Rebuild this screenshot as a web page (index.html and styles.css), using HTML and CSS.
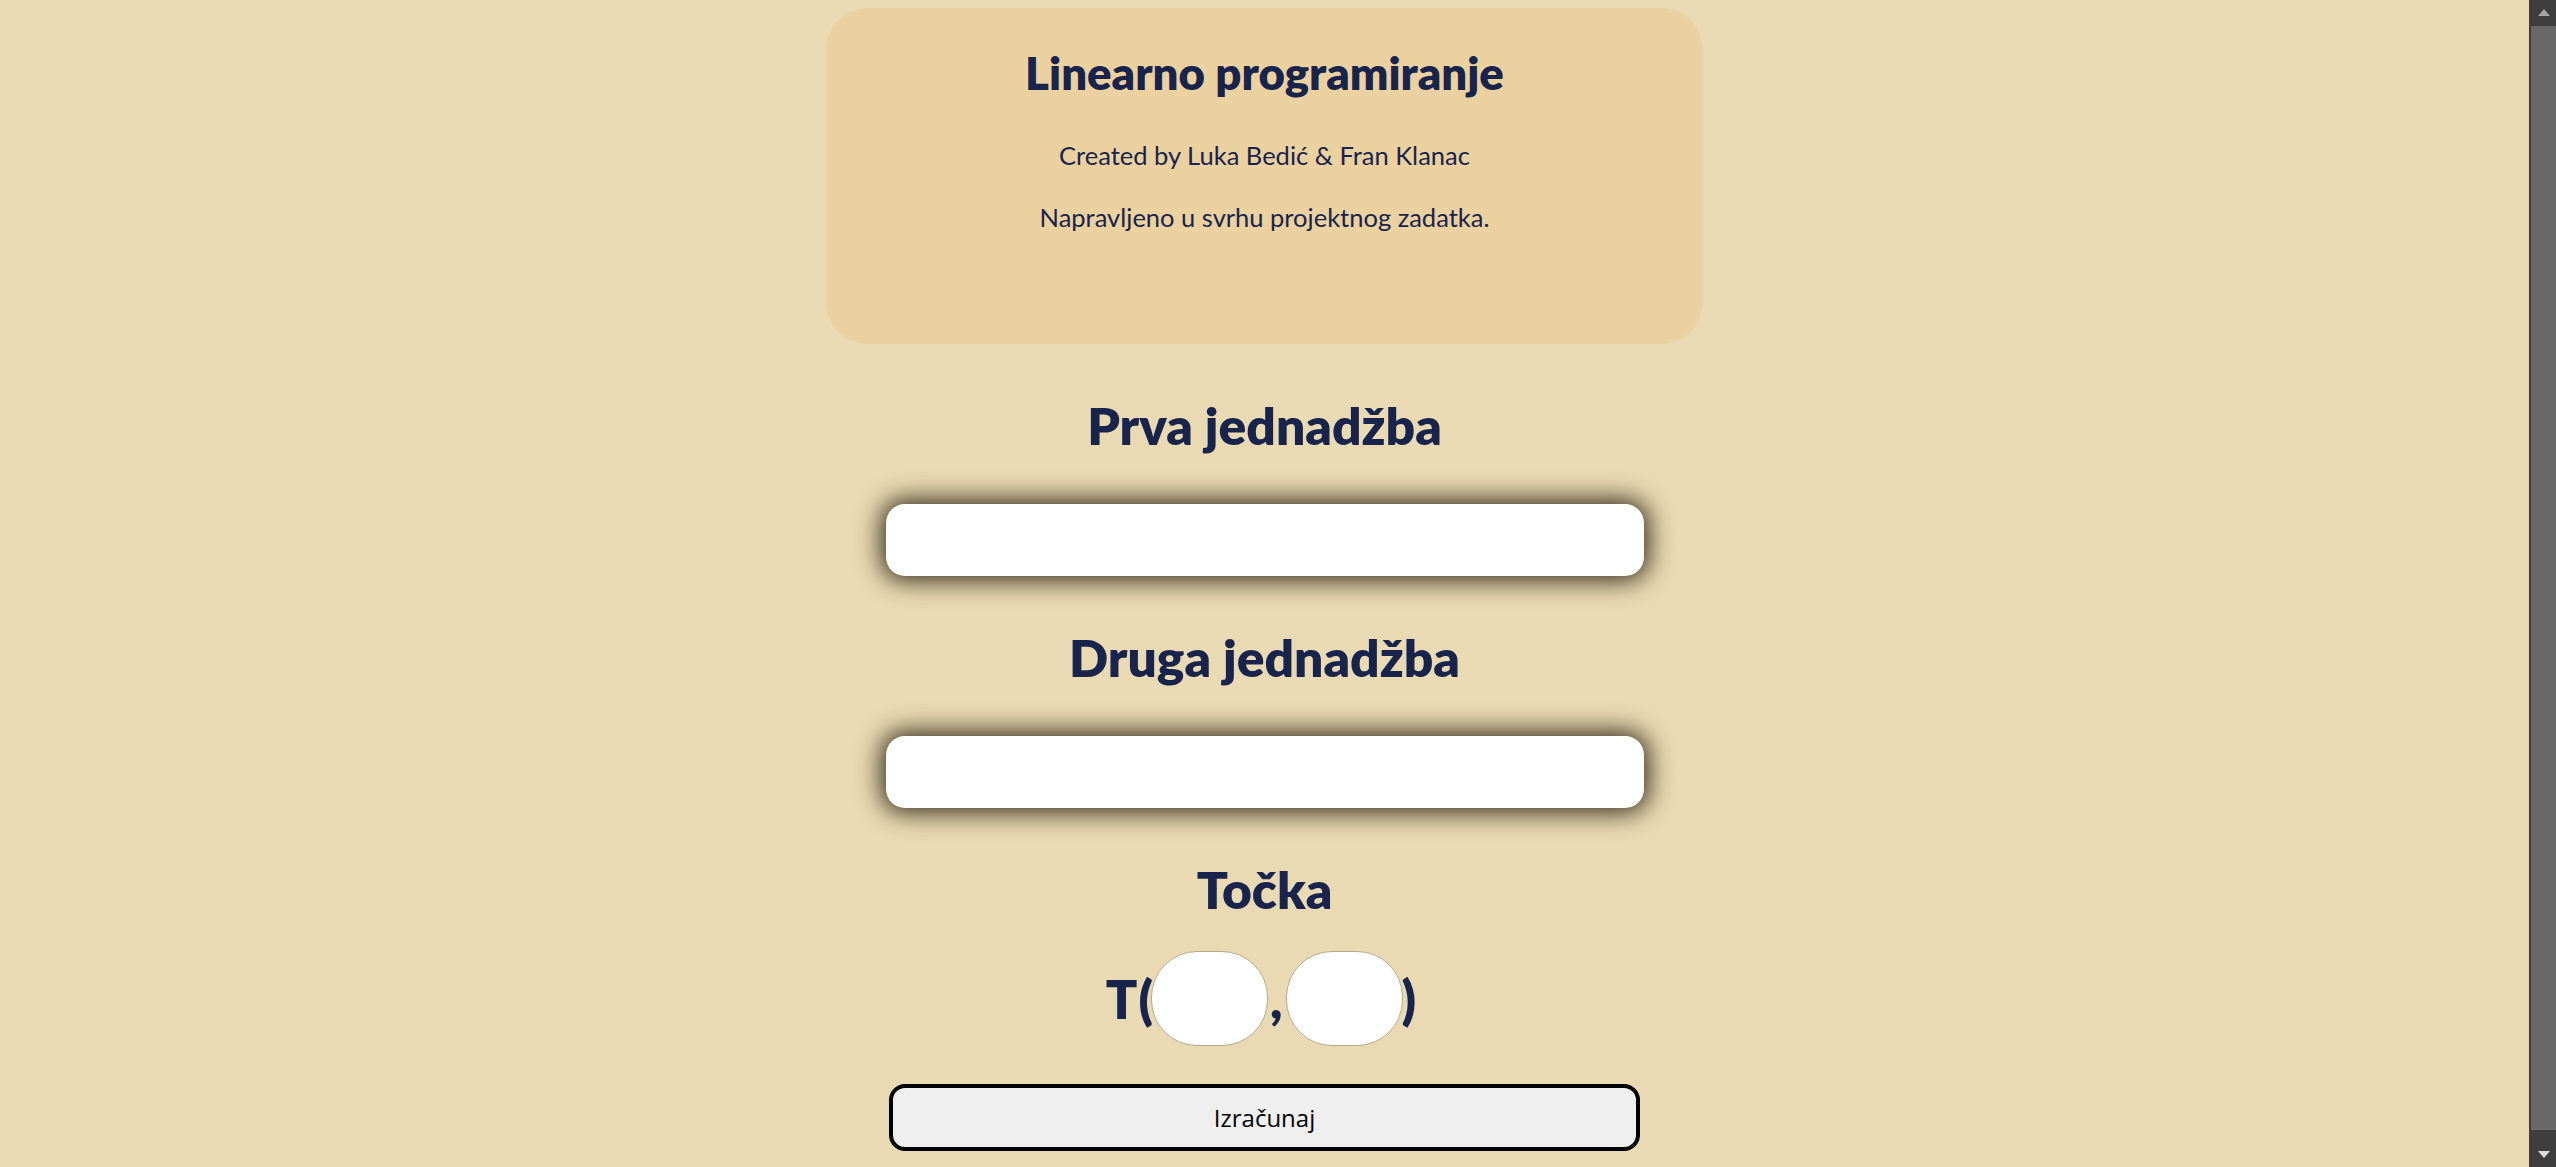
FILE: index.html
```html
<!DOCTYPE html>
<html lang="hr">
<head>
<meta charset="utf-8">
<title>Linearno programiranje</title>
<link rel="stylesheet" href="styles.css">
</head>
<body>
<main class="page">
  <header class="card">
    <h1 class="title">Linearno programiranje</h1>
    <p class="note note-first">Created by Luka Bedić &amp; Fran Klanac</p>
    <p class="note note-second">Napravljeno u svrhu projektnog zadatka.</p>
  </header>

  <h2 class="heading heading-first">Prva jednadžba</h2>
  <input class="eq-input" type="text">

  <h2 class="heading">Druga jednadžba</h2>
  <input class="eq-input" type="text">

  <h2 class="heading">Točka</h2>
  <div class="point-row">
    <span class="point-text">T(</span>
    <input class="coord coord-x" type="text">
    <span class="point-text point-comma">,</span>
    <input class="coord coord-y" type="text">
    <span class="point-text point-close">)</span>
  </div>

  <button class="calc-btn" type="button">Izračunaj</button>
</main>

<div class="scrollbar" aria-hidden="true">
  <div class="sb-btn sb-up"><span class="sb-arrow sb-arrow-up"></span></div>
  <div class="sb-track"><div class="sb-thumb"></div></div>
  <div class="sb-btn sb-down"><span class="sb-arrow sb-arrow-down"></span></div>
</div>
</body>
</html>
```
FILE: styles.css
```css
html {
  background: #e9dab3;
  scrollbar-width: none;
}
html::-webkit-scrollbar {
  display: none;
}

body {
  margin: 0;
  padding: 8px 27px 30px 0;
  background: #e9dab3;
  color: #19244d;
  font-family: "Lato", "Noto Sans", sans-serif;
}

.page {
  display: flex;
  flex-direction: column;
  align-items: center;
}

.card {
  box-sizing: border-box;
  width: 877px;
  height: 336px;
  padding-top: 40px;
  background: #ebd1a0;
  border-radius: 42px;
  text-align: center;
}

.title {
  margin: 0;
  font-size: 45.5px;
  line-height: 50px;
  font-weight: 800;
}

.note {
  margin: 0;
  font-size: 25.5px;
  line-height: 30px;
}
.note-first {
  margin-top: 42px;
}
.note-second {
  margin-top: 32px;
}

.heading {
  margin: 51px 0 0;
  font-size: 51.5px;
  line-height: 60px;
  font-weight: 800;
  text-align: center;
}

.eq-input {
  box-sizing: border-box;
  display: block;
  width: 758px;
  height: 72px;
  margin-top: 49px;
  border: 0;
  border-radius: 19px;
  background: #fff;
  box-shadow: 0 0 24px 5px rgba(35, 26, 8, 0.88);
  outline: none;
}

.point-row {
  display: flex;
  align-items: center;
  margin-top: 32px;
  height: 95px;
  font-size: 52px;
  font-weight: 800;
  line-height: 60px;
  transform: translateX(-3px);
}

.point-text {
  letter-spacing: 1px;
}
.point-comma {
  padding: 0 2px;
}
.point-close {
  margin-left: 3px;
}

.coord {
  position: relative;
  z-index: 1;
  box-sizing: border-box;
  width: 117px;
  height: 95px;
  border: 1px solid #b7aa8c;
  border-radius: 46px;
  background: #fff;
  outline: none;
}
.coord-x {
  margin-left: -3px;
}
.coord-y {
  margin-right: -4px;
}

.calc-btn {
  box-sizing: border-box;
  width: 751px;
  height: 67px;
  margin-top: 38px;
  border: 4px solid #000;
  border-radius: 16px;
  background: #efefef;
  color: #000;
  font-family: "Open Sans", "Noto Sans", sans-serif;
  font-size: 24px;
}

/* Browser-style scrollbar drawn on the right edge */
.scrollbar {
  position: fixed;
  top: 0;
  right: 0;
  bottom: 0;
  width: 27px;
  display: flex;
  flex-direction: column;
  background: #3e3e3e;
}
.sb-btn {
  height: 26px;
  flex: none;
  display: flex;
  justify-content: center;
  padding-left: 2px;
  box-sizing: border-box;
}
.sb-up {
  align-items: flex-start;
  padding-top: 9px;
}
.sb-down {
  align-items: flex-end;
  padding-bottom: 9px;
}
.sb-arrow {
  width: 0;
  height: 0;
  border-left: 6px solid transparent;
  border-right: 6px solid transparent;
}
.sb-arrow-up {
  border-bottom: 7px solid #a3a3a3;
}
.sb-arrow-down {
  border-top: 7px solid #dcdcdc;
}
.sb-track {
  flex: 1;
  display: flex;
  flex-direction: column;
  padding-left: 2px;
  padding-bottom: 11px;
}
.sb-thumb {
  flex: 1;
  background: #686868;
}
```
